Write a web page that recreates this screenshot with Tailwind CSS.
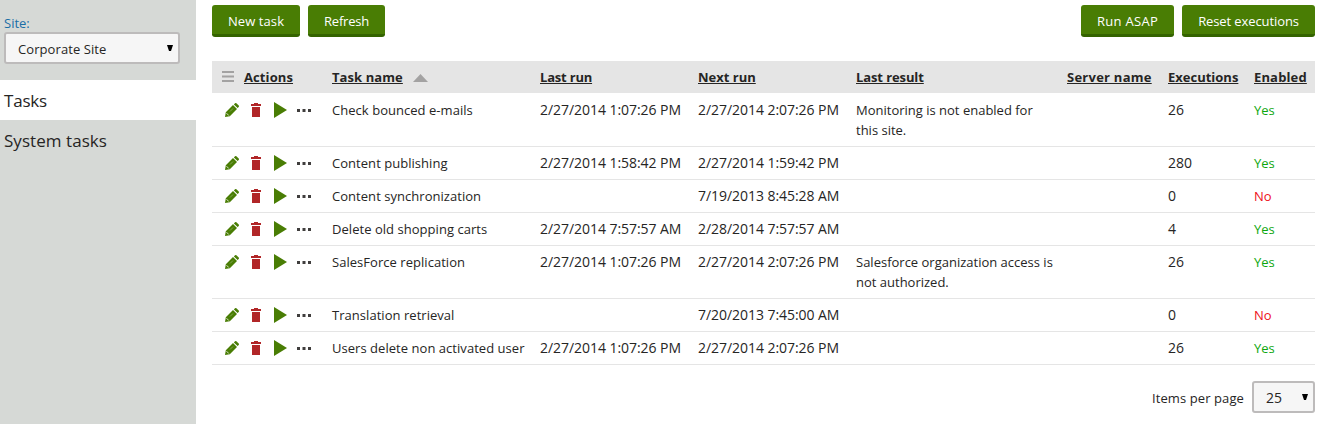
<!DOCTYPE html>
<html lang="en">
<head>
<meta charset="utf-8">
<title>Scheduled tasks</title>
<script src="https://cdn.jsdelivr.net/npm/@tailwindcss/browser@4"></script>
</head>
<body class="flex h-[424px] w-[1320px] overflow-hidden bg-white font-['Open_Sans','Noto_Sans',sans-serif] text-[13px] leading-5 text-[#262524]">
<svg class="hidden">
  <symbol id="edit" viewBox="0 0 14 14"><path d="M0 14l.8-4.800L8 2l4 4L4.800 13.200zM8.900 1.400l1.100-1.100q.7-.6 1.400 0l2.300 2.300q.6.700 0 1.400l-1.100 1.100z" fill="#497d04"/><path d="M1.500 10.200l2.300 2.300" stroke="#fff" stroke-width=".8"/><path d="M5 8.500l3-3" stroke="#a9c286" stroke-width=".6"/></symbol>
  <symbol id="trash" viewBox="0 0 10 14"><path d="M0 1h3V0h4v1h3v2H0zM1 4h8v10H1z" fill="#b12628"/></symbol>
  <symbol id="play" viewBox="0 0 13 16"><path d="M0 0l13 8L0 16z" fill="#497d04"/></symbol>
  <symbol id="more" viewBox="0 0 14 3"><path d="M0 0h3v3H0zM5.500 0h3v3h-3zM11 0h3v3h-3z" fill="#403e3d"/></symbol>
</svg>
<aside class="h-full w-[196px] shrink-0 bg-[#d6d9d6]">
  <div class="flex h-20 flex-col pl-1 pt-[13px]">
    <label class="h-[19px] text-[#1a6ea6]">Site:</label>
    <div class="flex h-8 w-44 items-center justify-between rounded-[3px] border-2 border-[#bdbbbb] bg-[#f6f6f6] pl-3 pr-[5px]">
      <span class="pt-0.5 tracking-[0.08px]">Corporate Site</span>
      <svg class="h-1.5 w-1.5" viewBox="0 0 6 6"><path d="M0 0h6L4 6H2z" fill="#000"/></svg>
    </div>
  </div>
  <div class="flex h-10 items-center bg-white pl-1 pt-0.5 text-[17px] tracking-[-0.2px]">Tasks</div>
  <div class="flex h-10 items-center pl-1 pt-0.5 text-[17px] tracking-[0.05px]">System tasks</div>
</aside>
<main class="flex w-[1119px] flex-col pl-4 pt-[5px]">
  <div class="flex h-14 items-start gap-2 text-white">
    <button class="h-8 w-[88px] rounded-[3px] border-b-3 border-[#346300] bg-[#497d04] pt-0.5 tracking-[0.1px]">New task</button>
    <button class="h-8 w-[77px] rounded-[3px] border-b-3 border-[#346300] bg-[#497d04] pt-0.5 tracking-[-0.2px]">Refresh</button>
    <button class="ml-auto h-8 w-[93px] rounded-[3px] border-b-3 border-[#346300] bg-[#497d04] pt-0.5 tracking-[0.3px]">Run ASAP</button>
    <button class="h-8 w-[133px] rounded-[3px] border-b-3 border-[#346300] bg-[#497d04] pt-0.5 tracking-[-0.1px]">Reset executions</button>
  </div>
  <div class="mb-px grid h-8 grid-cols-[120px_208px_158px_158px_211px_101px_86px_61px] items-center bg-[#e5e5e5] font-bold">
    <div class="flex items-center gap-2.5 pl-2.5"><svg class="mb-0.5 h-[11px] w-3" viewBox="0 0 12 11"><path d="M0 0h12v2H0zM0 4.500h12v2H0zM0 9h12v2H0z" fill="#a3a2a2"/></svg><span class="underline decoration-1 underline-offset-1 [text-decoration-skip-ink:none] tracking-[0.1px]">Actions</span></div>
    <div class="flex items-center gap-2.5"><span class="underline decoration-1 underline-offset-1 [text-decoration-skip-ink:none] tracking-[0.08px]">Task name</span><svg class="mt-0.5 h-2 w-[15px]" viewBox="0 0 15 8"><path d="M7.500 0L15 8H0z" fill="#a3a2a2"/></svg></div>
    <div class="flex"><span class="underline decoration-1 underline-offset-1 [text-decoration-skip-ink:none] tracking-[-0.2px]">Last run</span></div>
    <div class="flex"><span class="underline decoration-1 underline-offset-1 [text-decoration-skip-ink:none]">Next run</span></div>
    <div class="flex"><span class="underline decoration-1 underline-offset-1 [text-decoration-skip-ink:none] tracking-[-0.1px]">Last result</span></div>
    <div class="flex"><span class="underline decoration-1 underline-offset-1 [text-decoration-skip-ink:none] tracking-[0.25px]">Server name</span></div>
    <div class="flex"><span class="underline decoration-1 underline-offset-1 [text-decoration-skip-ink:none]">Executions</span></div>
    <div class="flex"><span class="underline decoration-1 underline-offset-1 [text-decoration-skip-ink:none] tracking-[0.15px]">Enabled</span></div>
  </div>
  <div id="rows"></div>
  <div class="mt-4 flex items-center justify-end gap-2">
    <span class="pt-0.5 tracking-[0.1px]">Items per page</span>
    <div class="flex h-8 w-[63px] items-center justify-between rounded-[3px] border-2 border-[#bdbbbb] bg-[#f6f6f6] pl-3 pr-[5px]"><span class="pt-0.5 text-sm">25</span><svg class="h-1.5 w-1.5" viewBox="0 0 6 6"><path d="M0 0h6L4 6H2z" fill="#000"/></svg></div>
  </div>
</main>
<script>
const tasks = [
  ["Check bounced e-mails", "2/27/2014 1:07:26 PM", "2/27/2014 2:07:26 PM", "Monitoring is not enabled for<br>this site.", 26, true],
  ["Content publishing", "2/27/2014 1:58:42 PM", "2/27/2014 1:59:42 PM", "", 280, true],
  ["Content synchronization", "", "7/19/2013 8:45:28 AM", "", 0, false],
  ["Delete old shopping carts", "2/27/2014 7:57:57 AM", "2/28/2014 7:57:57 AM", "", 4, true],
  ["SalesForce replication", "2/27/2014 1:07:26 PM", "2/27/2014 2:07:26 PM", "Salesforce organization access is<br>not authorized.", 26, true],
  ["Translation retrieval", "", "7/20/2013 7:45:00 AM", "", 0, false],
  ["Users delete non activated user", "2/27/2014 1:07:26 PM", "2/27/2014 2:07:26 PM", "", 26, true]
];
document.getElementById("rows").innerHTML = tasks.map(([name, last, next, result, runs, on]) => `
  <div class="grid grid-cols-[120px_208px_158px_158px_211px_101px_86px_61px] border-b border-[#e5e5e5] py-1.5">
    <div class="flex h-5 items-center pl-[13px]">
      <svg class="mr-3 h-3.5 w-3.5"><use href="#edit"/></svg>
      <svg class="mr-[13px] h-3.5 w-2.5"><use href="#trash"/></svg>
      <svg class="mr-2.5 h-4 w-[13px]"><use href="#play"/></svg>
      <svg class="h-[3px] w-3.5"><use href="#more"/></svg>
    </div>
    <div class="tracking-[0.04px]">${name}</div><div class="text-sm leading-5 tracking-[-0.05px]">${last}</div><div class="text-sm leading-5 tracking-[-0.05px]">${next}</div><div class="whitespace-nowrap">${result}</div><div></div><div class="text-sm leading-5">${runs}</div>
    <div class="${on ? "text-[#0fa70f]" : "text-[#ee1020]"}">${on ? "Yes" : "No"}</div>
  </div>`).join("");
</script>
</body>
</html>
